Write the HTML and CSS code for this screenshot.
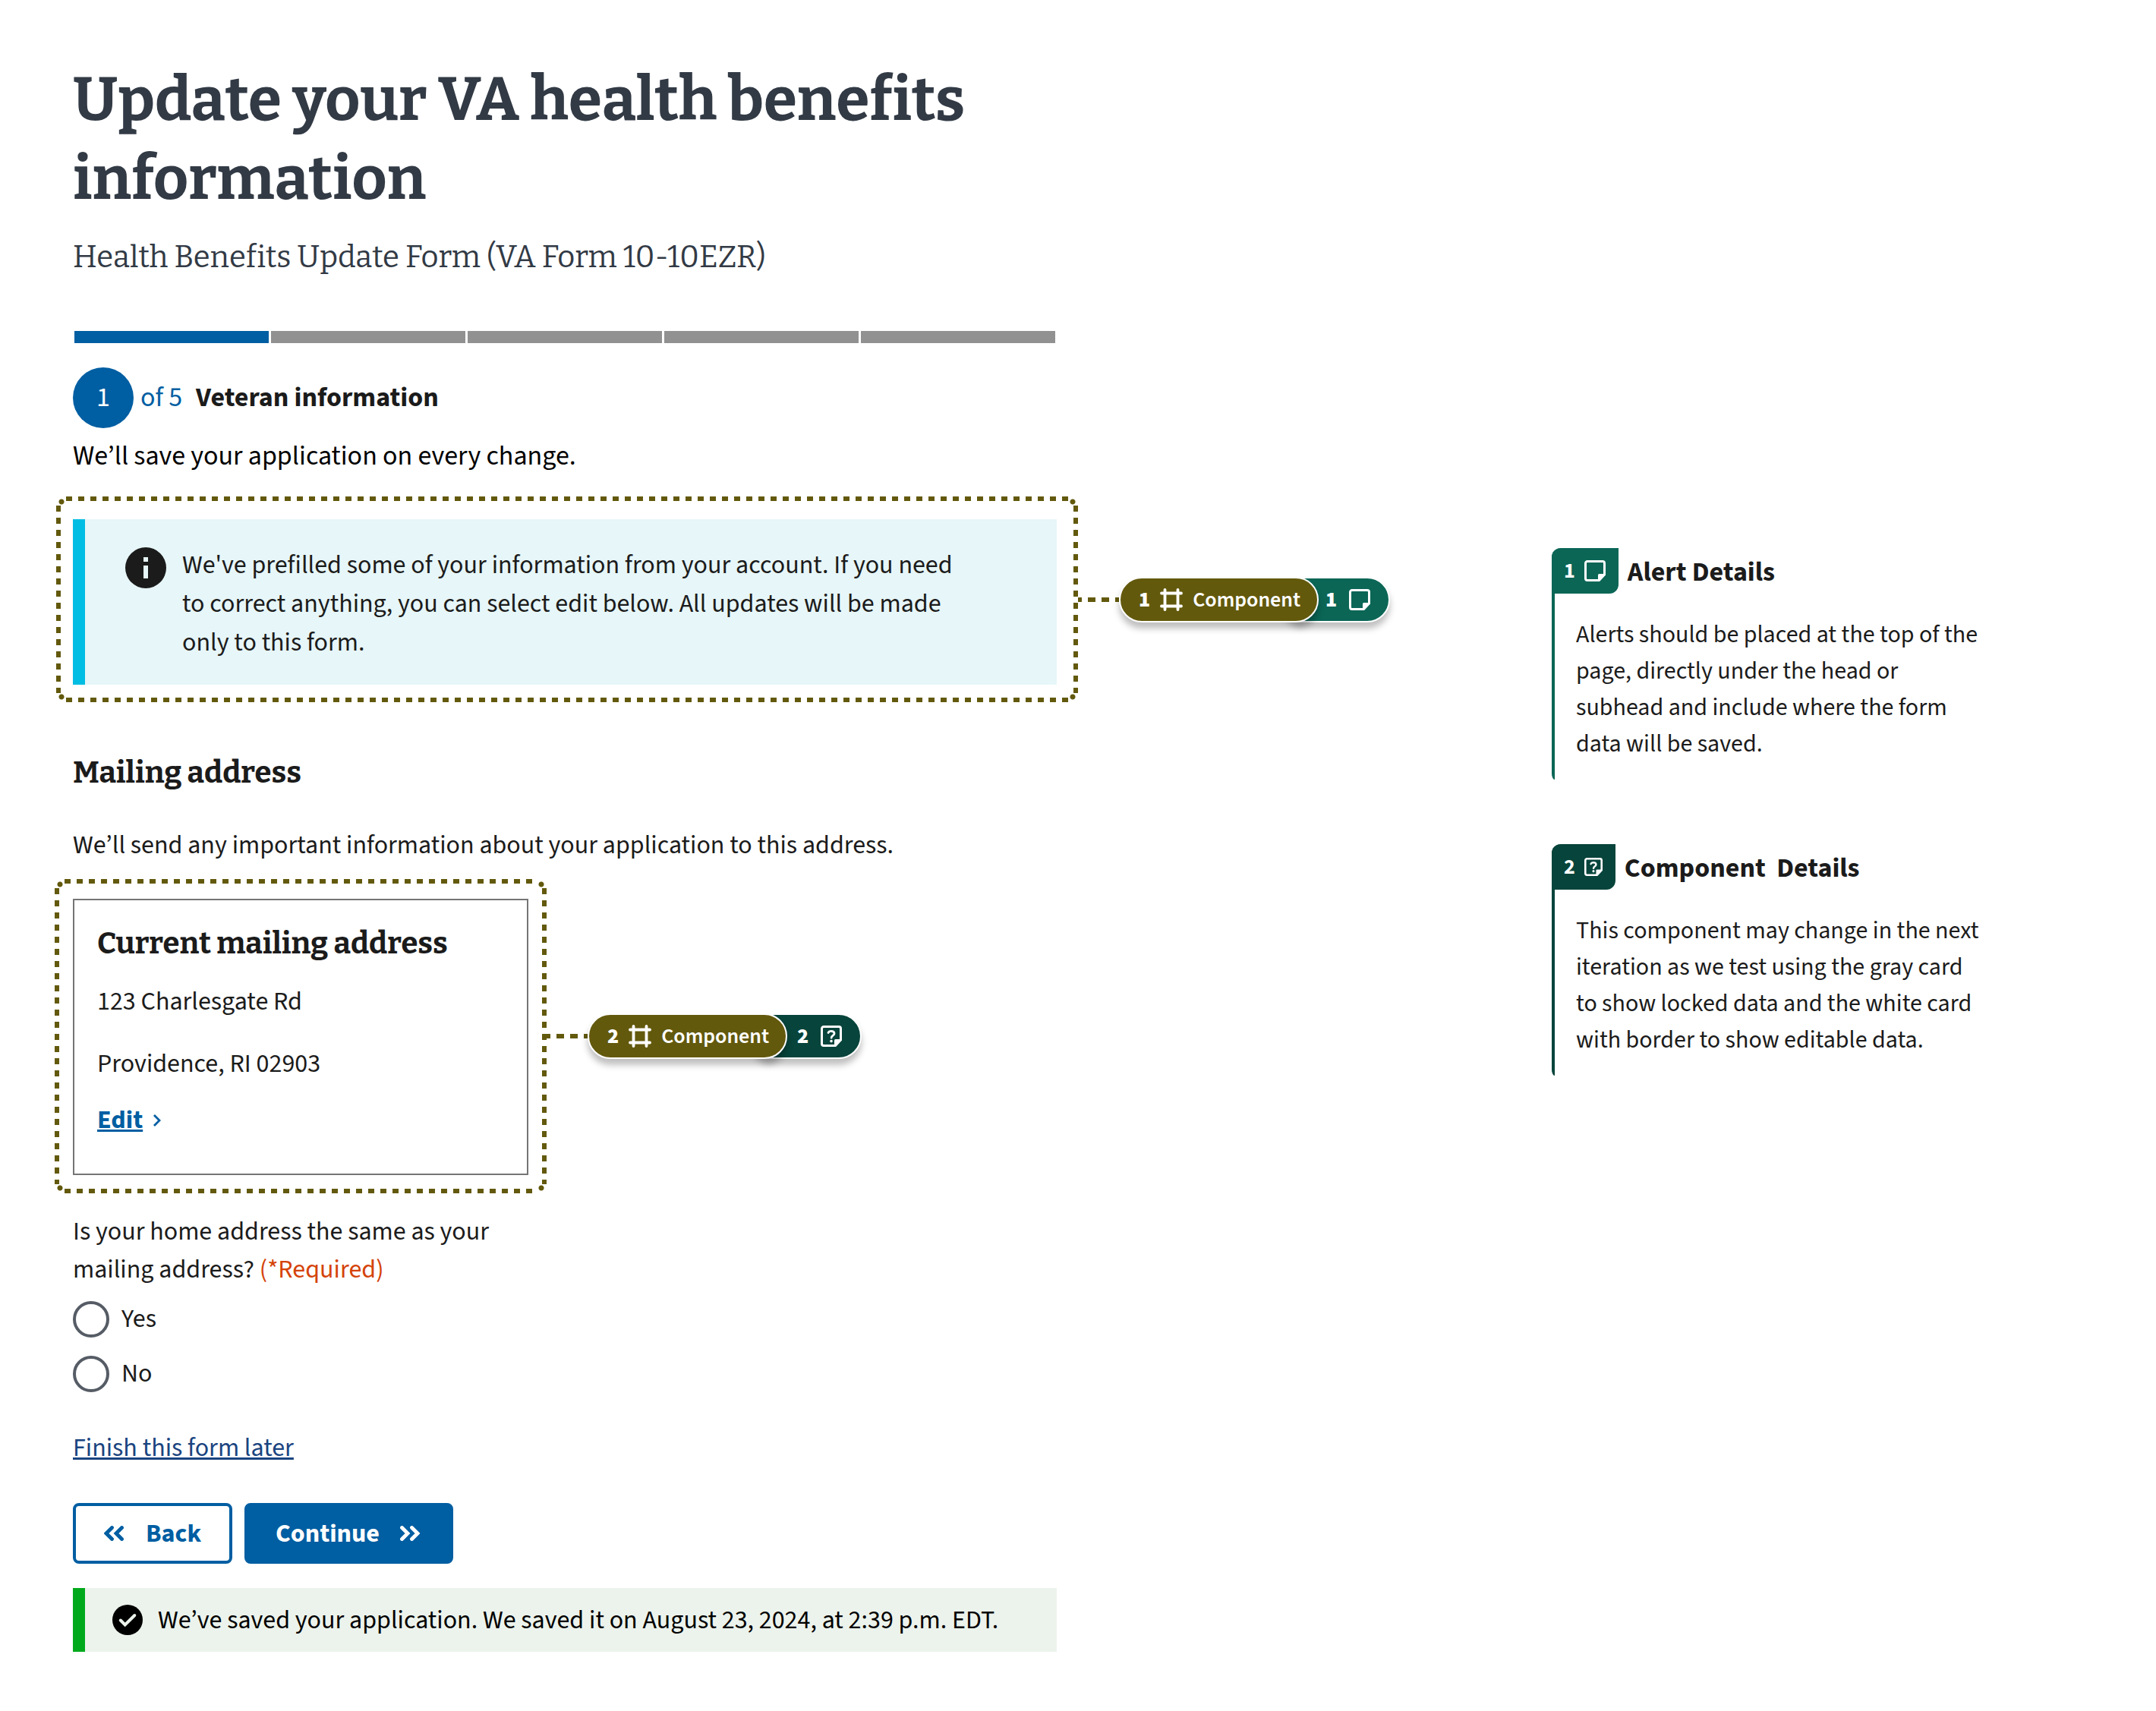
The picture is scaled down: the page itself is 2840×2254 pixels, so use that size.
FILE: index.html
```html
<!DOCTYPE html>
<html lang="en">
<head>
<meta charset="utf-8">
<meta name="viewport" content="width=device-width, initial-scale=1">
<title>Update your VA health benefits information</title>
<link rel="stylesheet" href="styles.css">
</head>
<body>
<svg class="sprite" aria-hidden="true">
  <symbol id="icon-frame" viewBox="0 0 30 30">
    <path d="M6.5 2v26M23.5 2v26M2 6.5h26M2 23.5h26" fill="none" stroke="currentColor" stroke-width="3.8" stroke-linecap="round"/>
  </symbol>
  <symbol id="icon-note" viewBox="0 0 28 28">
    <path d="M26.5 18.5V4A2.5 2.5 0 0 0 24 1.5H4A2.5 2.5 0 0 0 1.5 4v20A2.5 2.5 0 0 0 4 26.5h15z" fill="none" stroke="currentColor" stroke-width="3" stroke-linejoin="round"/>
    <path d="M18 28v-8.5a1.5 1.5 0 0 1 1.5-1.5H28v1.5L20 28z" fill="currentColor"/>
  </symbol>
  <symbol id="icon-note-question" viewBox="0 0 28 28">
    <path d="M26.5 18.5V4A2.5 2.5 0 0 0 24 1.5H4A2.5 2.5 0 0 0 1.5 4v20A2.5 2.5 0 0 0 4 26.5h15z" fill="none" stroke="currentColor" stroke-width="3" stroke-linejoin="round"/>
    <path d="M18 28v-8.5a1.5 1.5 0 0 1 1.5-1.5H28v1.5L20 28z" fill="currentColor"/>
    <path d="M10 9.5C10.600 8 12 7.300 13.900 7.300c2.500 0 4.100 1.200 4.100 3.100 0 2.800-3.900 2.600-3.900 5.800" fill="none" stroke="currentColor" stroke-width="2.8" stroke-linecap="round"/>
    <circle cx="14" cy="20.600" r="1.8" fill="currentColor"/>
  </symbol>
</svg>
<div class="page">
  <main class="form">
    <header>
      <h1 class="title">Update your VA health benefits information</h1>
      <p class="subtitle">Health Benefits Update Form (VA Form 10-10EZR)</p>
    </header>

    <div class="progress" role="progressbar" aria-label="Form progress" aria-valuemin="0" aria-valuemax="5" aria-valuenow="1">
      <span class="progress__step progress__step--current"></span>
      <span class="progress__step"></span>
      <span class="progress__step"></span>
      <span class="progress__step"></span>
      <span class="progress__step"></span>
    </div>
    <h2 class="step">
      <span class="step__number">1</span>
      <span class="step__total">of 5</span>
      <span class="step__name">Veteran information</span>
    </h2>
    <p class="save-note">We’ll save your application on every change.</p>

    <div class="annotated annotated--alert">
      <div class="frame frame--alert">
        <div class="alert">
          <svg class="alert__icon" viewBox="0 0 54 54" aria-hidden="true">
            <circle cx="27" cy="27" r="27" fill="#1b1b1b"/>
            <path d="M24 13h6v6h-6zM24 24h6v17h-6z" fill="#e7f6f8"/>
          </svg>
          <p class="alert__text">We've prefilled some of your information from your account. If you need to correct anything, you can select edit below. All updates will be made only to this form.</p>
        </div>
      </div>
      <span class="connector"></span>
      <div class="pill pill--component"><b>1</b><svg class="pill__frame-icon" aria-hidden="true"><use href="#icon-frame"/></svg><span>Component</span></div>
      <div class="pill pill--note"><b>1</b><svg class="pill__note-icon" aria-hidden="true"><use href="#icon-note"/></svg></div>
    </div>

    <h3 class="section-title">Mailing address</h3>
    <p class="section-text">We’ll send any important information about your application to this address.</p>

    <div class="annotated annotated--card">
      <div class="frame frame--card">
        <section class="card">
          <h4 class="card__title">Current mailing address</h4>
          <address class="card__address">
            <span>123 Charlesgate Rd</span>
            <span>Providence, RI 02903</span>
          </address>
          <a class="card__edit" href="#edit"><span>Edit</span><svg class="card__chevron" viewBox="0 0 12 18" aria-hidden="true"><path d="M2 2l7 7-7 7" fill="none" stroke="currentColor" stroke-width="2.8"/></svg></a>
        </section>
      </div>
      <span class="connector"></span>
      <div class="pill pill--component"><b>2</b><svg class="pill__frame-icon" aria-hidden="true"><use href="#icon-frame"/></svg><span>Component</span></div>
      <div class="pill pill--question"><b>2</b><svg class="pill__note-icon" aria-hidden="true"><use href="#icon-note-question"/></svg></div>
    </div>

    <form>
      <fieldset class="question">
        <legend class="question__legend">Is your home address the same as your mailing address? <span class="question__required">(*Required)</span></legend>
        <div class="question__options">
          <label class="option"><input class="option__input" type="radio" name="same-address" value="yes">Yes</label>
          <label class="option"><input class="option__input" type="radio" name="same-address" value="no">No</label>
        </div>
      </fieldset>
      <a class="later" href="#later">Finish this form later</a>
      <div class="actions">
        <button class="button button--back" type="button">
          <svg class="button__icon" viewBox="0 0 26 20" aria-hidden="true"><path d="M10.5 2.5 3 10l7.5 7.5M23.5 2.5 16 10l7.5 7.5" fill="none" stroke="currentColor" stroke-width="4.8" stroke-linecap="round"/></svg>
          Back
        </button>
        <button class="button button--continue" type="submit">
          Continue
          <svg class="button__icon" viewBox="0 0 26 20" aria-hidden="true"><path d="M2.5 2.5 10 10l-7.5 7.5M15.5 2.5 23 10l-7.5 7.5" fill="none" stroke="currentColor" stroke-width="4.8" stroke-linecap="round"/></svg>
        </button>
      </div>
    </form>

    <div class="saved" role="status">
      <svg class="saved__icon" viewBox="0 0 40 40" aria-hidden="true">
        <circle cx="20" cy="20" r="20" fill="#000"/>
        <path d="m10.8 20.5 5.900 6L29.300 14" fill="none" stroke="#ecf3ec" stroke-width="4" stroke-linecap="round"/>
      </svg>
      <p>We’ve saved your application. We saved it on August 23, 2024, at 2:39 p.m. EDT.</p>
    </div>
  </main>

  <aside class="notes">
    <section class="note note--alert">
      <header class="note__head">
        <span class="note__tag"><b>1</b><svg class="note__icon" aria-hidden="true"><use href="#icon-note"/></svg></span>
        <h2 class="note__title">Alert Details</h2>
      </header>
      <p class="note__body">Alerts should be placed at the top of the page, directly under the head or subhead and include where the form data will be saved.</p>
    </section>
    <section class="note note--component">
      <header class="note__head">
        <span class="note__tag"><b>2</b><svg class="note__icon note__icon--small" aria-hidden="true"><use href="#icon-note-question"/></svg></span>
        <h2 class="note__title">Component  Details</h2>
      </header>
      <p class="note__body">This component may change in the next iteration as we test using the gray card to show locked data and the white card with border to show editable data.</p>
    </section>
  </aside>
</div>
</body>
</html>
```
FILE: styles.css
```css
:root {
  --sans: "Source Sans 3", "Noto Sans CJK JP", "Noto Sans", sans-serif;
  --serif: "Bitter", "DejaVu Serif", serif;
  --olive: #63590d;
  --blue: #005ea2;
  --ink: #1b1b1b;
  --measure: 1296px;
}

* {
  box-sizing: border-box;
}

body {
  margin: 0;
  background: #fff;
  color: var(--ink);
  font-family: var(--sans);
  font-size: 34px;
  line-height: 51px;
}

h1, h2, h3, h4, p {
  margin: 0;
}

svg {
  display: block;
  flex: none;
}

.sprite {
  position: absolute;
  width: 0;
  height: 0;
}

.page {
  display: grid;
  grid-template-columns: minmax(0, 1fr) 600px;
  padding: 79px 196px 78px 96px;
}

/* Form column */
.title {
  max-width: var(--measure);
  color: #323a45;
  font: 700 80px/104px var(--serif);
}

.subtitle {
  margin-top: 25px;
  color: #323a45;
  font: 400 40px/54px var(--serif);
}

.progress {
  display: flex;
  gap: 3px;
  max-width: var(--measure);
  margin-top: 70px;
  padding: 0 2px;
}

.progress__step {
  flex: 1;
  height: 16px;
  background: #919191;
}

.progress__step--current {
  background: var(--blue);
}

.step {
  display: flex;
  align-items: center;
  margin-top: 32px;
  font-size: 36px;
  font-weight: 400;
  line-height: 54px;
}

.step__number {
  display: grid;
  place-items: center;
  width: 80px;
  height: 80px;
  border-radius: 50%;
  background: var(--blue);
  color: #fff;
}

.step__total {
  margin: 0 18px 0 9px;
  color: var(--blue);
}

.step__name {
  font-weight: 700;
}

.save-note {
  margin-top: 10px;
  color: #000;
  font-size: 36px;
  line-height: 54px;
}

/* Annotation frame, connector and pills */
.annotated {
  display: flex;
  align-items: center;
}

.annotated--alert {
  margin: 26px 0 0 -22px;
}

.annotated--card {
  margin: 19px 0 0 -24px;
}

.frame {
  --across: repeating-linear-gradient(90deg, var(--olive) 0 8px, transparent 8px 16px);
  --down: repeating-linear-gradient(180deg, var(--olive) 0 8px, transparent 8px 16px);
  --dot: radial-gradient(circle, var(--olive) 3px, transparent 4px);
  background:
    var(--across) 13px 0 / calc(100% - 26px) 6px,
    var(--across) 13px 100% / calc(100% - 26px) 6px,
    var(--down) 0 12px / 6px calc(100% - 24px),
    var(--down) 100% 12px / 6px calc(100% - 24px),
    var(--dot) 3px 3px / 8px 8px,
    var(--dot) calc(100% - 3px) 3px / 8px 8px,
    var(--dot) 3px calc(100% - 3px) / 8px 8px,
    var(--dot) calc(100% - 3px) calc(100% - 3px) / 8px 8px;
  background-repeat: no-repeat;
}

.frame--alert {
  flex: 0 1 1346px;
  padding: 30px 28px 23px 22px;
}

.frame--card {
  flex: 0 1 648px;
  padding: 26px 24px 24px;
}

.connector {
  flex: none;
  width: 54px;
  height: 6px;
  background: repeating-linear-gradient(90deg, var(--olive) 0 5px, transparent 5px 13px, var(--olive) 13px 18px);
}

.pill {
  display: flex;
  flex: none;
  align-items: center;
  height: 60px;
  border: 2px solid #fff;
  border-radius: 30px;
  color: #fff;
  font-size: 28px;
  font-weight: 600;
  line-height: 42px;
  box-shadow: 0 8px 8px rgba(0, 0, 0, 0.25);
}

.pill--component {
  position: relative;
  gap: 13px;
  padding: 0 22px 0 24px;
  background: var(--olive);
}

.pill--note,
.pill--question {
  gap: 16px;
  margin-left: -49px;
  padding: 0 24px 0 56px;
}

.pill--note {
  background: #0b6656;
}

.pill--question {
  padding-left: 60px;
  background: #07443b;
}

.pill__frame-icon {
  width: 30px;
  height: 30px;
}

.pill__note-icon {
  width: 28px;
  height: 28px;
}

/* Prefill alert */
.alert {
  display: flex;
  gap: 21px;
  padding: 35px 124px 30px 53px;
  border-left: 16px solid #00bde3;
  background: #e7f6f8;
}

.alert__icon {
  width: 54px;
  height: 54px;
  margin-top: 2px;
}

/* Mailing address */
.section-title {
  margin-top: 67px;
  font: 700 40px/52px var(--serif);
}

.section-text {
  margin-top: 44px;
}

.card {
  padding: 31px 30px 45px;
  border: 2px solid #757575;
  background: #fff;
}

.card__title {
  font: 700 40px/52px var(--serif);
}

.card__address {
  display: grid;
  gap: 31px;
  margin: 25px 0 23px;
  font-style: normal;
}

.card__edit {
  display: flex;
  align-items: center;
  gap: 13px;
  width: fit-content;
  color: var(--blue);
  font-weight: 700;
  text-decoration: none;
}

.card__edit span {
  text-decoration: underline;
}

.card__chevron {
  width: 12px;
  height: 18px;
}

/* Home address question */
.question {
  max-width: 600px;
  margin: 26px 0 0;
  padding: 0;
  border: 0;
}

.question__legend {
  padding: 0;
  line-height: 50px;
}

.question__required {
  color: #d54309;
}

.question__options {
  display: grid;
  gap: 24px;
  margin-top: 16px;
}

.option {
  display: flex;
  align-items: center;
  gap: 16px;
  line-height: 48px;
}

.option__input {
  appearance: none;
  width: 48px;
  height: 48px;
  margin: 0;
  border: 4px solid #565c65;
  border-radius: 50%;
  background: #fff;
}

.option__input:checked {
  background: var(--blue);
  box-shadow: inset 0 0 0 6px #fff;
}

.later {
  display: block;
  width: fit-content;
  margin-top: 48px;
  color: #1a4480;
}

.actions {
  display: flex;
  gap: 16px;
  margin-top: 47px;
}

.button {
  display: flex;
  align-items: center;
  height: 80px;
  border: 4px solid var(--blue);
  border-radius: 8px;
  font: 700 34px/51px var(--sans);
  cursor: pointer;
}

.button--back {
  gap: 29px;
  padding: 0 37px;
  background: #fff;
  color: var(--blue);
}

.button--continue {
  gap: 27px;
  padding: 0 40px 0 37px;
  background: var(--blue);
  color: #fff;
}

.button__icon {
  width: 26px;
  height: 20px;
}

/* Saved message */
.saved {
  display: flex;
  align-items: center;
  gap: 20px;
  max-width: var(--measure);
  min-height: 84px;
  margin-top: 32px;
  padding-left: 36px;
  border-left: 16px solid #00a91c;
  background: #ecf3ec;
  color: #000;
}

.saved__icon {
  width: 40px;
  height: 40px;
}

/* Annotation notes */
.notes {
  display: flex;
  flex-direction: column;
  gap: 85px;
  padding-top: 643px;
}

.note {
  padding: 0 32px 23px 28px;
  border-left: 4px solid var(--tone);
  border-radius: 12px 0 0 4px / 12px 0 0 8px;
}

.note--alert {
  --tone: #0b6656;
}

.note--component {
  --tone: #07443b;
}

.note__head {
  display: flex;
  gap: 12px;
  margin-left: -32px;
}

.note__tag {
  display: flex;
  align-items: center;
  gap: 12px;
  height: 60px;
  padding: 0 17px 0 16px;
  border-radius: 12px 0;
  background: var(--tone);
  color: #fff;
  font-size: 28px;
}

.note__icon {
  width: 28px;
  height: 28px;
}

.note__icon--small {
  width: 24px;
  height: 24px;
}

.note__title {
  font-size: 36px;
  line-height: 64px;
  white-space: pre;
}

.note__body {
  margin-top: 26px;
  font-size: 32px;
  line-height: 48px;
}
```
